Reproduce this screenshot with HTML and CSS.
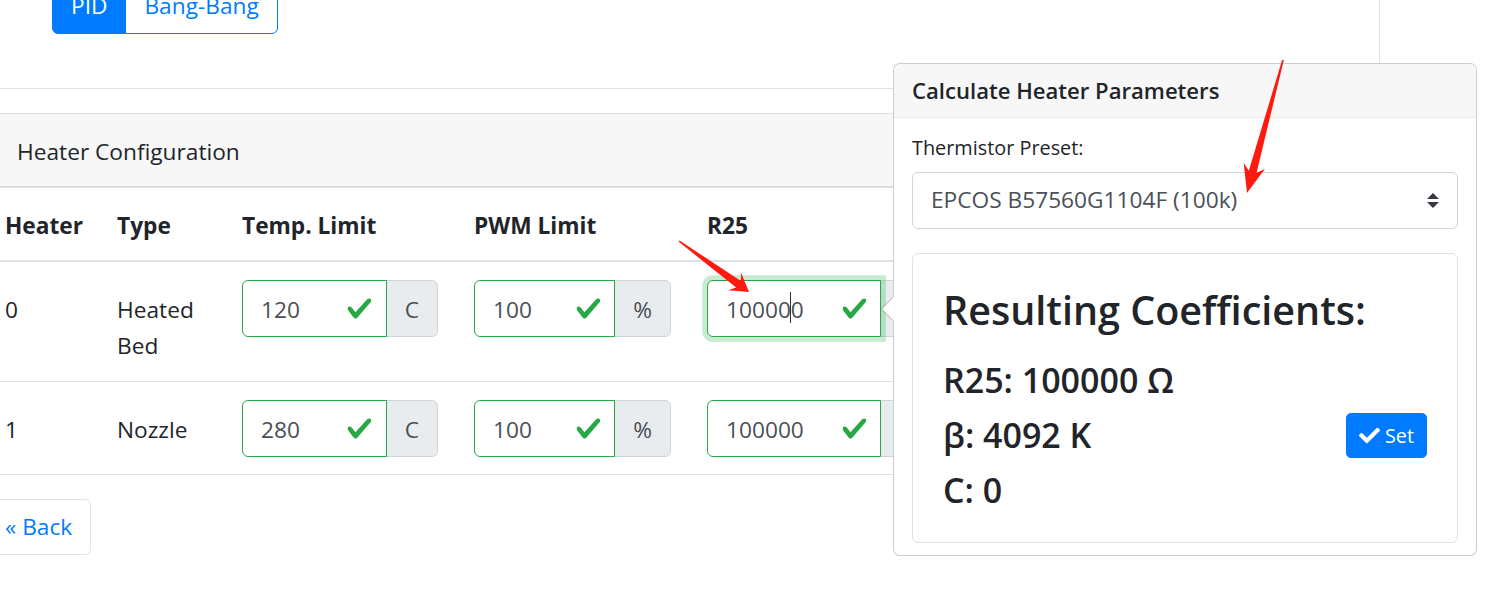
FILE: index.html
```html
<!DOCTYPE html>
<html lang="en">
<head>
<meta charset="utf-8">
<title>Heater Configuration</title>
<link rel="stylesheet" href="styles.css">
</head>
<body>
<div class="page">
  <div class="top">
    <div class="btn-group">
      <button class="btn btn-primary">PID</button>
      <button class="btn btn-outline-primary">Bang-Bang</button>
    </div>
  </div>

  <div class="card">
    <div class="card-header">Heater Configuration</div>
    <table class="table">
      <colgroup>
        <col class="c-heater"><col class="c-type"><col class="c-temp"><col class="c-pwm"><col class="c-r25"><col>
      </colgroup>
      <thead>
        <tr><th>Heater</th><th>Type</th><th>Temp. Limit</th><th>PWM Limit</th><th>R25</th><th></th></tr>
      </thead>
      <tbody>
        <tr>
          <td>0</td>
          <td>Heated Bed</td>
          <td>
            <div class="input-group">
              <div class="field"><input class="form-control" value="120"><svg class="valid" viewBox="0 0 8 8"><path d="M2.3 6.73L.6 4.53c-.4-1.04.46-1.4 1.1-.8l1.1 1.4 3.4-3.8c.6-.63 1.6-.27 1.2.7l-4 4.6c-.43.5-.8.4-1.1.1z"/></svg></div>
              <span class="addon">C</span>
            </div>
          </td>
          <td>
            <div class="input-group">
              <div class="field"><input class="form-control" value="100"><svg class="valid" viewBox="0 0 8 8"><path d="M2.3 6.73L.6 4.53c-.4-1.04.46-1.4 1.1-.8l1.1 1.4 3.4-3.8c.6-.63 1.6-.27 1.2.7l-4 4.6c-.43.5-.8.4-1.1.1z"/></svg></div>
              <span class="addon">%</span>
            </div>
          </td>
          <td>
            <div class="input-group">
              <div class="field"><input class="form-control focused" value="100000"><span class="caret"></span><svg class="valid" viewBox="0 0 8 8"><path d="M2.3 6.73L.6 4.53c-.4-1.04.46-1.4 1.1-.8l1.1 1.4 3.4-3.8c.6-.63 1.6-.27 1.2.7l-4 4.6c-.43.5-.8.4-1.1.1z"/></svg></div>
              <span class="addon">Ω</span>
            </div>
          </td>
          <td></td>
        </tr>
        <tr>
          <td>1</td>
          <td>Nozzle</td>
          <td>
            <div class="input-group">
              <div class="field"><input class="form-control" value="280"><svg class="valid" viewBox="0 0 8 8"><path d="M2.3 6.73L.6 4.53c-.4-1.04.46-1.4 1.1-.8l1.1 1.4 3.4-3.8c.6-.63 1.6-.27 1.2.7l-4 4.6c-.43.5-.8.4-1.1.1z"/></svg></div>
              <span class="addon">C</span>
            </div>
          </td>
          <td>
            <div class="input-group">
              <div class="field"><input class="form-control" value="100"><svg class="valid" viewBox="0 0 8 8"><path d="M2.3 6.73L.6 4.53c-.4-1.04.46-1.4 1.1-.8l1.1 1.4 3.4-3.8c.6-.63 1.6-.27 1.2.7l-4 4.6c-.43.5-.8.4-1.1.1z"/></svg></div>
              <span class="addon">%</span>
            </div>
          </td>
          <td>
            <div class="input-group">
              <div class="field"><input class="form-control" value="100000"><svg class="valid" viewBox="0 0 8 8"><path d="M2.3 6.73L.6 4.53c-.4-1.04.46-1.4 1.1-.8l1.1 1.4 3.4-3.8c.6-.63 1.6-.27 1.2.7l-4 4.6c-.43.5-.8.4-1.1.1z"/></svg></div>
              <span class="addon">Ω</span>
            </div>
          </td>
          <td></td>
        </tr>
      </tbody>
    </table>
  </div>

  <button class="btn btn-back">« Back</button>
</div>

<div class="popover">
  <div class="popover-arrow"></div>
  <h3 class="popover-header">Calculate Heater Parameters</h3>
  <div class="popover-body">
    <label class="label">Thermistor Preset:</label>
    <div class="select-wrap">
      <select class="custom-select">
        <option>EPCOS B57560G1104F (100k)</option>
      </select>
      <svg class="select-arrows" viewBox="0 0 4 5"><path d="M2 0L0 2h4zm0 5L0 3h4z"/></svg>
    </div>
    <div class="result-card">
      <h3 class="result-title">Resulting Coefficients:</h3>
      <div class="result-row">
        <div class="coeffs">
          <h4>R25: 100000 Ω</h4>
          <h4>β: 4092 K</h4>
          <h4>C: 0</h4>
        </div>
        <button class="btn btn-sm btn-primary"><svg class="fa-check" viewBox="0 0 512 512"><path d="M173.898 439.404l-166.4-166.4c-9.997-9.997-9.997-26.206 0-36.204l36.203-36.204c9.997-9.998 26.207-9.998 36.204 0L192 312.69 432.095 72.596c9.997-9.997 26.207-9.997 36.204 0l36.203 36.204c9.997 9.997 9.997 26.206 0 36.204l-294.4 294.401c-9.998 9.997-26.207 9.997-36.204-.001z"/></svg> Set</button>
      </div>
    </div>
  </div>
</div>

<svg class="annotations" viewBox="0 0 1503 592" width="1503" height="592">
  <polygon points="1283.8,60.2 1256.6,172.8 1264.9,168.9 1247,193 1243.7,163.1 1248.8,170.8 1282.2,59.8"/>
  <polygon points="678.5,241.6 736.1,287.5 728,290.2 749,292 741,272.4 740.9,281.1 679.5,240.4"/>
</svg>
</body>
</html>
```

FILE: styles.css
```css
* { box-sizing: border-box; }

html, body {
  margin: 0;
  padding: 0;
  background: #fff;
}

body {
  font-family: "Open Sans", "Noto Sans", "DejaVu Sans", sans-serif;
  font-size: 22.7px;
  line-height: 36px;
  color: #212529;
  overflow: hidden;
}

.page {
  margin-left: -14px;
  width: 1394px;
}

.top {
  height: 111px;
  margin-top: -22px;
  padding-left: 66px;
  border-right: 1px solid #dee2e6;
  border-bottom: 1px solid #dee2e6;
}

.btn-group {
  display: inline-flex;
}

.btn {
  font-family: inherit;
  font-size: 22.7px;
  line-height: 36px;
  padding: 9px 18px;
  border: 1px solid transparent;
  border-radius: 6px;
  background: #fff;
  cursor: pointer;
}

.btn-primary {
  background: #007bff;
  border-color: #007bff;
  color: #fff;
}

.btn-outline-primary {
  color: #007bff;
  border-color: #007bff;
  background: #fff;
}

.btn-group .btn:first-child {
  border-top-right-radius: 0;
  border-bottom-right-radius: 0;
}

.btn-group .btn:last-child {
  margin-left: -1px;
  border-top-left-radius: 0;
  border-bottom-left-radius: 0;
}

.card {
  margin-top: 24px;
  border: 1px solid rgba(0, 0, 0, 0.125);
  border-radius: 6px;
  background: #fff;
}

.card-header {
  padding: 19.5px 30px 16.5px;
  background: #f7f7f7;
  border-bottom: 1px solid rgba(0, 0, 0, 0.125);
  border-radius: 5px 5px 0 0;
}

.table {
  width: 100%;
  border-collapse: collapse;
  table-layout: fixed;
  color: #212529;
}

.c-heater { width: 112px; }
.c-type { width: 125px; }
.c-temp { width: 232px; }
.c-pwm { width: 233px; }
.c-r25 { width: 265px; }

.table th,
.table td {
  padding: 18px 18px 17px;
  border-top: 1px solid #dee2e6;
  text-align: left;
  vertical-align: baseline;
}

.table thead th {
  padding-top: 19.5px;
  padding-bottom: 16.5px;
  font-weight: 700;
  border-bottom: 2px solid #dee2e6;
  vertical-align: bottom;
}

.input-group {
  display: flex;
  align-items: stretch;
  width: 100%;
}

.field {
  position: relative;
  flex: 1 1 auto;
  width: 1%;
  z-index: 2;
}

.form-control {
  display: block;
  width: 100%;
  height: 57px;
  padding: 10px 54px 8px 18px;
  font-family: inherit;
  font-size: 22.7px;
  line-height: 36px;
  color: #495057;
  background: #fff;
  border: 1px solid #28a745;
  border-radius: 6px 0 0 6px;
  outline: none;
}

.form-control.focused {
  box-shadow: 0 0 0 4.8px rgba(40, 167, 69, 0.25);
}

.valid {
  position: absolute;
  right: 13.5px;
  top: 15px;
  width: 27px;
  height: 27px;
  fill: #28a745;
}

.caret {
  position: absolute;
  left: 83px;
  top: 12px;
  width: 1px;
  height: 31px;
  background: #333;
}

.addon {
  display: flex;
  align-items: center;
  margin-left: -1px;
  padding: 10px 18px 8px;
  line-height: 36px;
  color: #495057;
  background: #e9ecef;
  border: 1px solid #ced4da;
  border-radius: 0 6px 6px 0;
  white-space: nowrap;
}

.btn-back {
  display: block;
  margin-top: 24px;
  color: #007bff;
  background: #fff;
  border: 1px solid #dee2e6;
}

/* Popover */
.popover {
  position: absolute;
  left: 893px;
  top: 63px;
  width: 584px;
  background: #fff;
  border: 1px solid rgba(0, 0, 0, 0.2);
  border-radius: 7px;
  z-index: 10;
}

.popover-arrow {
  position: absolute;
  left: -13px;
  top: 233px;
  width: 12px;
  height: 24px;
}

.popover-arrow::before,
.popover-arrow::after {
  content: "";
  position: absolute;
  top: 0;
  border-style: solid;
  border-color: transparent;
  border-width: 12px 12px 12px 0;
}

.popover-arrow::before {
  left: 0;
  border-right-color: rgba(0, 0, 0, 0.25);
}

.popover-arrow::after {
  left: 1px;
  border-right-color: #fff;
}

.popover-header {
  margin: 0;
  padding: 12px 18px;
  font-size: 22.1px;
  font-weight: 600;
  line-height: 28.8px;
  color: #212529;
  background: #f7f7f7;
  border-bottom: 1px solid #ebebeb;
  border-radius: 6px 6px 0 0;
}

.popover-body {
  padding: 12px 18px;
  font-size: 19.85px;
  line-height: 31.5px;
}

.label {
  display: block;
  padding-top: 2px;
  margin-bottom: 8.5px;
}

.select-wrap {
  position: relative;
  margin-bottom: 24px;
}

.custom-select {
  display: block;
  width: 100%;
  height: 57px;
  padding: 9px 54px 9px 18px;
  font-family: inherit;
  font-size: 22.7px;
  line-height: 36px;
  color: #495057;
  background: #fff;
  border: 1px solid #ced4da;
  border-radius: 6px;
  -webkit-appearance: none;
  appearance: none;
  outline: none;
}

.select-arrows {
  position: absolute;
  right: 19px;
  top: 21px;
  width: 12px;
  height: 15px;
  fill: #343a40;
  pointer-events: none;
}

.result-card {
  padding: 30px;
  border: 1px solid rgba(0, 0, 0, 0.125);
  border-radius: 6px;
}

.result-title {
  margin: 0 0 23px;
  padding-top: 1.5px;
  font-size: 39.5px;
  font-weight: 600;
  line-height: 50.4px;
  color: #212529;
}

.result-row {
  display: flex;
  justify-content: space-between;
  align-items: center;
}

.coeffs h4 {
  margin: 0 0 12px;
  font-size: 34px;
  font-weight: 600;
  line-height: 43.2px;
  color: #212529;
}

.coeffs h4:last-child {
  margin-bottom: 0;
}

.btn-sm {
  display: inline-flex;
  align-items: center;
  padding: 6px 12px;
  font-size: 19.85px;
  line-height: 31.5px;
  border-radius: 4.8px;
}

.fa-check {
  width: 21px;
  height: 21px;
  fill: #fff;
  margin-right: 5px;
}

.annotations {
  position: absolute;
  left: 0;
  top: 0;
  z-index: 20;
  pointer-events: none;
  fill: #ff1a10;
}
```
